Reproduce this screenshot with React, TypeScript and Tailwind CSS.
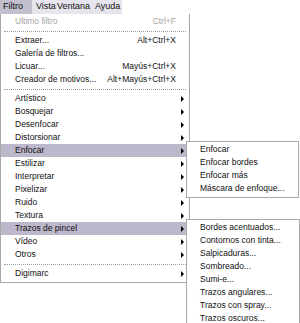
import React from 'react';

type Item =
  | { kind: 'sep' }
  | { kind: 'item'; label: string; shortcut?: string; sub?: boolean; disabled?: boolean; active?: boolean };

const mainItems: Item[] = [
  { kind: 'item', label: 'Ultimo filtro', shortcut: 'Ctrl+F', disabled: true },
  { kind: 'sep' },
  { kind: 'item', label: 'Extraer...', shortcut: 'Alt+Ctrl+X' },
  { kind: 'item', label: 'Galería de filtros...' },
  { kind: 'item', label: 'Licuar...', shortcut: 'Mayús+Ctrl+X' },
  { kind: 'item', label: 'Creador de motivos...', shortcut: 'Alt+Mayús+Ctrl+X' },
  { kind: 'sep' },
  { kind: 'item', label: 'Artístico', sub: true },
  { kind: 'item', label: 'Bosquejar', sub: true },
  { kind: 'item', label: 'Desenfocar', sub: true },
  { kind: 'item', label: 'Distorsionar', sub: true },
  { kind: 'item', label: 'Enfocar', sub: true, active: true },
  { kind: 'item', label: 'Estilizar', sub: true },
  { kind: 'item', label: 'Interpretar', sub: true },
  { kind: 'item', label: 'Pixelizar', sub: true },
  { kind: 'item', label: 'Ruido', sub: true },
  { kind: 'item', label: 'Textura', sub: true },
  { kind: 'item', label: 'Trazos de pincel', sub: true, active: true },
  { kind: 'item', label: 'Vídeo', sub: true },
  { kind: 'item', label: 'Otros', sub: true },
  { kind: 'sep' },
  { kind: 'item', label: 'Digimarc', sub: true },
];

const enfocarItems = ['Enfocar', 'Enfocar bordes', 'Enfocar más', 'Máscara de enfoque...'];
const trazosItems = [
  'Bordes acentuados...',
  'Contornos con tinta...',
  'Salpicaduras...',
  'Sombreado...',
  'Sumi-e...',
  'Trazos angulares...',
  'Trazos con spray...',
  'Trazos oscuros...',
];

function Arrow() {
  return <span className="w-0 h-0 border-y-[3px] border-y-transparent border-l-[3px] border-l-black" />;
}

function Separator() {
  return (
    <div className="h-[6px] flex items-center px-[3px]">
      <div className="w-full border-t border-dotted border-[#9c9c9c]" />
    </div>
  );
}

function SubMenu({ items, className }: { items: string[]; className: string }) {
  return (
    <div className={`absolute bg-white border border-[#a8a8a8] pt-px pb-[2px] ${className}`}>
      {items.map((label) => (
        <div key={label} className="h-[13px] flex items-center pl-[13px] whitespace-nowrap">
          {label}
        </div>
      ))}
    </div>
  );
}

export default function App() {
  return (
    <div
      className="relative w-[300px] h-[323px] bg-white overflow-hidden text-[8.5px] text-[#111]"
      style={{ fontFamily: '"Liberation Sans", Arial, sans-serif' }}
    >
      {/* Menu bar */}
      <div className="flex h-[14px] w-[122px] bg-[#e6e4ec] items-center text-[9px] whitespace-nowrap">
        <div className="h-full flex items-center pl-[3px] w-[32px] shrink-0 bg-[#c2bece]">Filtro</div>
        <div className="pl-[4px] w-[25px] shrink-0">Vista</div>
        <div className="w-[38px] shrink-0">Ventana</div>
        <div className="shrink-0">Ayuda</div>
      </div>

      {/* Filtro dropdown */}
      <div className="w-[190px] bg-white border border-t-0 border-[#a8a8a8] flex flex-col pt-px pb-[2px]">
        {mainItems.map((it, i) =>
          it.kind === 'sep' ? (
            <Separator key={i} />
          ) : (
            <div
              key={i}
              className={`h-[13px] flex items-center pl-[14px] ${it.sub ? 'pr-[5px]' : 'pr-[13px]'} ${
                it.active ? 'bg-[#bcb7cb]' : ''
              } ${it.disabled ? 'text-[#a4a4a4]' : ''}`}
            >
              <span className="whitespace-nowrap">{it.label}</span>
              <span className="ml-auto whitespace-nowrap">{it.shortcut}</span>
              {it.sub && <Arrow />}
            </div>
          )
        )}
      </div>

      {/* Submenus */}
      <SubMenu items={enfocarItems} className="left-[186px] top-[141px] w-[113px]" />
      <SubMenu items={trazosItems} className="left-[186px] top-[219px] w-[114px]" />
    </div>
  );
}
